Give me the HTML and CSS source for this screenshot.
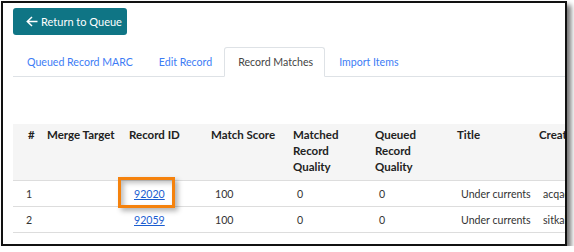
FILE: index.html
```html
<!DOCTYPE html>
<html lang="en">
<head>
    <meta charset="UTF-8">
    <title>Record Matches</title>
    <link rel="stylesheet" href="styles.css">
</head>
<body>
    <div class="frame">
        <button class="btn-return">
            <svg width="12" height="11" viewBox="0 0 12 11"><path d="M11.5 5.5H1.5M6 1L1.3 5.5L6 10" fill="none" stroke="#fff" stroke-width="1.5"/></svg>
            Return to Queue
        </button>

        <div class="tabs">
            <a href="#" class="tab">Queued Record MARC</a>
            <a href="#" class="tab">Edit Record</a>
            <a href="#" class="tab active">Record Matches</a>
            <a href="#" class="tab">Import Items</a>
        </div>

        <table class="matches">
            <colgroup>
                <col class="c-num">
                <col class="c">
                <col class="c">
                <col class="c">
                <col class="c">
                <col class="c">
                <col class="c">
                <col class="c">
            </colgroup>
            <thead>
                <tr>
                    <th class="num">#</th>
                    <th>Merge Target</th>
                    <th>Record ID</th>
                    <th>Match Score</th>
                    <th>Matched Record Quality</th>
                    <th>Queued Record Quality</th>
                    <th>Title</th>
                    <th>Creator</th>
                </tr>
            </thead>
            <tbody>
                <tr>
                    <td class="num">1</td>
                    <td></td>
                    <td class="rid"><a href="#">92020</a><span class="callout"></span></td>
                    <td>100</td>
                    <td>0</td>
                    <td>0</td>
                    <td>Under currents</td>
                    <td>acqadmin</td>
                </tr>
                <tr>
                    <td class="num">2</td>
                    <td></td>
                    <td class="rid"><a href="#">92059</a></td>
                    <td>100</td>
                    <td>0</td>
                    <td>0</td>
                    <td>Under currents</td>
                    <td>sitkalsa</td>
                </tr>
            </tbody>
        </table>
    </div>
</body>
</html>
```

FILE: styles.css
```css
body {
    margin: 0;
    background-color: #fff;
    font-family: Lato, "Open Sans", sans-serif;
    font-size: 10.6px;
    color: #333;
}
.frame {
    box-sizing: border-box;
    width: 566px;
    height: 245px;
    margin: 1px 0 0 1px;
    padding: 5px 0 0 10px;
    border: 2px solid #111;
    box-shadow: 4px 4px 5px rgba(0,0,0,0.55);
    overflow: hidden;
    background-color: #fff;
}
.btn-return {
    display: flex;
    align-items: center;
    gap: 3px;
    height: 27px;
    width: 114px;
    padding: 0 0 0 13px;
    border: none;
    border-radius: 3px;
    background-color: #0f7585;
    color: #fff;
    font-family: inherit;
    font-size: 11px;
    white-space: nowrap;
}
.tabs {
    display: flex;
    margin-top: 12px;
    border-bottom: 1px solid #dee2e6;
    width: 600px;
}
.tab {
    display: block;
    box-sizing: border-box;
    height: 30px;
    line-height: 29px;
    padding: 0 11px 0 13px;
    margin-bottom: -1px;
    border: 1px solid transparent;
    border-radius: 3px 3px 0 0;
    color: #3d7cf5;
    text-decoration: none;
    white-space: nowrap;
}
.tab.active {
    color: #444;
    border-color: #dee2e6 #dee2e6 #fff;
    background-color: #fff;
}
.matches {
    margin-top: 47px;
    table-layout: fixed;
    width: 604px;
    border-collapse: collapse;
}
.c-num {
    width: 30px;
}
.c {
    width: 82px;
}
.matches th {
    background-color: #f5f5f5;
    color: #222;
    font-size: 11.5px;
    font-weight: bold;
    text-align: left;
    vertical-align: top;
    line-height: 16px;
    padding: 3px 4px 5px;
    height: 48px;
    border-bottom: 1px solid #ddd;
}
.matches th.num {
    padding-left: 15px;
}
.matches td {
    height: 25px;
    padding: 0 4px 0 8px;
    border-bottom: 1px solid #ddd;
    white-space: nowrap;
}
.matches td.num {
    padding-left: 13px;
}
.matches td.rid {
    position: relative;
    padding-left: 9px;
}
.rid a {
    color: #1a5dd0;
}
.callout {
    position: absolute;
    left: -7px;
    top: -4px;
    width: 57px;
    height: 31px;
    box-sizing: border-box;
    border: 3px solid #f5820d;
    box-shadow: 3px 3px 5px rgba(0,0,0,0.3), inset 3px 3px 5px rgba(0,0,0,0.25);
}
```
